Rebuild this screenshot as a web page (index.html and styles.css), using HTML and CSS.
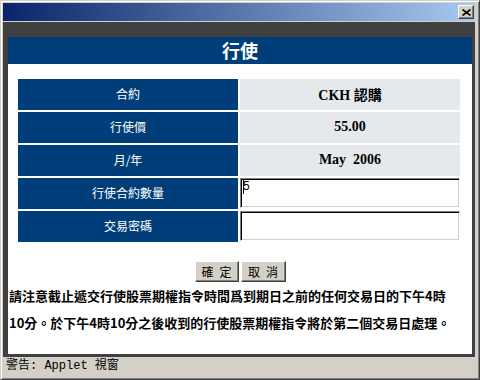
FILE: index.html
```html
<!DOCTYPE html>
<html lang="zh-Hant">
<head>
    <meta charset="UTF-8">
    <title>行使</title>
    <link rel="stylesheet" href="styles.css">
</head>
<body>
    <div class="window">
        <div class="titlebar">
            <span class="close">
                <svg width="9" height="7" viewBox="0 0 9 7">
                    <path d="M0.5 0.5 L8.5 6.5 M8.5 0.5 L0.5 6.5" stroke="#000" stroke-width="1.6" fill="none"/>
                </svg>
            </span>
        </div>
        <div class="applet">
            <div class="heading">行使</div>
            <div class="panel">
                <div class="grid">
                    <div class="label">合約</div>
                    <div class="value">CKH 認購</div>
                    <div class="label">行使價</div>
                    <div class="value">55.00</div>
                    <div class="label">月/年</div>
                    <div class="value">May&nbsp; 2006</div>
                    <div class="label">行使合約數量</div>
                    <div class="field"><span class="caret"></span>5</div>
                    <div class="label">交易密碼</div>
                    <div class="field"></div>
                </div>
                <div class="buttons">
                    <button class="btn btn-ok">確&ensp;定</button>
                    <button class="btn btn-cancel">取&ensp;消</button>
                </div>
                <p class="note">請注意截止遞交行使股票期權指令時間爲到期日之前的任何交易日的下午4時<br>10分。於下午4時10分之後收到的行使股票期權指令將於第二個交易日處理。</p>
            </div>
        </div>
        <div class="status">警告: Applet 視窗</div>
    </div>
</body>
</html>
```

FILE: styles.css
```css
body {
    margin: 0;
    font-family: "Noto Sans CJK TC", sans-serif;
}
.window {
    width: 480px;
    height: 380px;
    box-sizing: border-box;
    background-color: #d4d0c8;
    border: 1px solid;
    border-color: #d4d0c8 #404040 #404040 #d4d0c8;
    box-shadow: inset 1px 1px #fff, inset -1px -1px #808080;
    padding: 2px 4px 2px 2px;
}
.titlebar {
    height: 18px;
    margin-bottom: 1px;
    background: linear-gradient(to right, #0a246a, #a6caf0);
    display: flex;
    align-items: center;
    justify-content: flex-end;
    padding-right: 1px;
}
.close {
    width: 16px;
    height: 14px;
    box-sizing: border-box;
    background-color: #d4d0c8;
    border: 1px solid;
    border-color: #fff #404040 #404040 #fff;
    box-shadow: inset -1px -1px #808080;
    display: flex;
    align-items: center;
    justify-content: center;
}
.applet {
    background-color: #404040;
    padding: 15px 3px 3px 5px;
}
.heading {
    height: 27px;
    background-color: #003e7a;
    color: white;
    font-size: 18px;
    font-weight: bold;
    line-height: 27px;
    text-align: center;
}
.panel {
    height: 290px;
    background-color: white;
    padding-top: 15px;
    box-sizing: border-box;
}
.grid {
    display: grid;
    grid-template-columns: 220px 220px;
    grid-auto-rows: 31px;
    gap: 2px;
    margin: 0 10px;
}
.label {
    background-color: #003e7a;
    color: white;
    font-size: 12px;
    display: flex;
    align-items: center;
    justify-content: center;
    padding-bottom: 2px;
}
.value {
    background-color: #e6e9ec;
    font-family: "Liberation Serif", "Noto Sans CJK TC", serif;
    font-weight: bold;
    font-size: 14px;
    display: flex;
    align-items: center;
    justify-content: center;
    padding-bottom: 2px;
}
.field {
    height: 30px;
    box-sizing: border-box;
    border: 1px solid;
    border-color: #808080 #fff #fff #808080;
    box-shadow: inset 1px 1px #000, inset -1px -1px #d4d0c8;
    padding: 1px 2px;
    font-family: "Liberation Sans", sans-serif;
    font-size: 12px;
    line-height: 13px;
    display: flex;
    align-items: flex-start;
}
.caret {
    width: 0;
    height: 14px;
    border-left: 1px solid #000;
    margin-right: -1px;
}
.buttons {
    margin-top: 19px;
    display: flex;
    justify-content: center;
    gap: 2px;
}
.btn {
    height: 21px;
    padding: 0;
    font-family: "Noto Sans CJK TC", sans-serif;
    font-size: 12px;
    background-color: #d4d0c8;
    border: 1px solid;
    border-color: #fff #404040 #404040 #fff;
    box-shadow: inset -1px -1px #808080;
    color: black;
}
.btn-ok {
    width: 44px;
}
.btn-cancel {
    width: 45px;
}
.note {
    margin: 0 0 0 1px;
    font-size: 13px;
    font-weight: bold;
    line-height: 27px;
    white-space: nowrap;
}
.status {
    height: 18px;
    line-height: 18px;
    padding-left: 3px;
    font-family: "Liberation Mono", "Noto Sans CJK TC", monospace;
    font-size: 12px;
}
```
